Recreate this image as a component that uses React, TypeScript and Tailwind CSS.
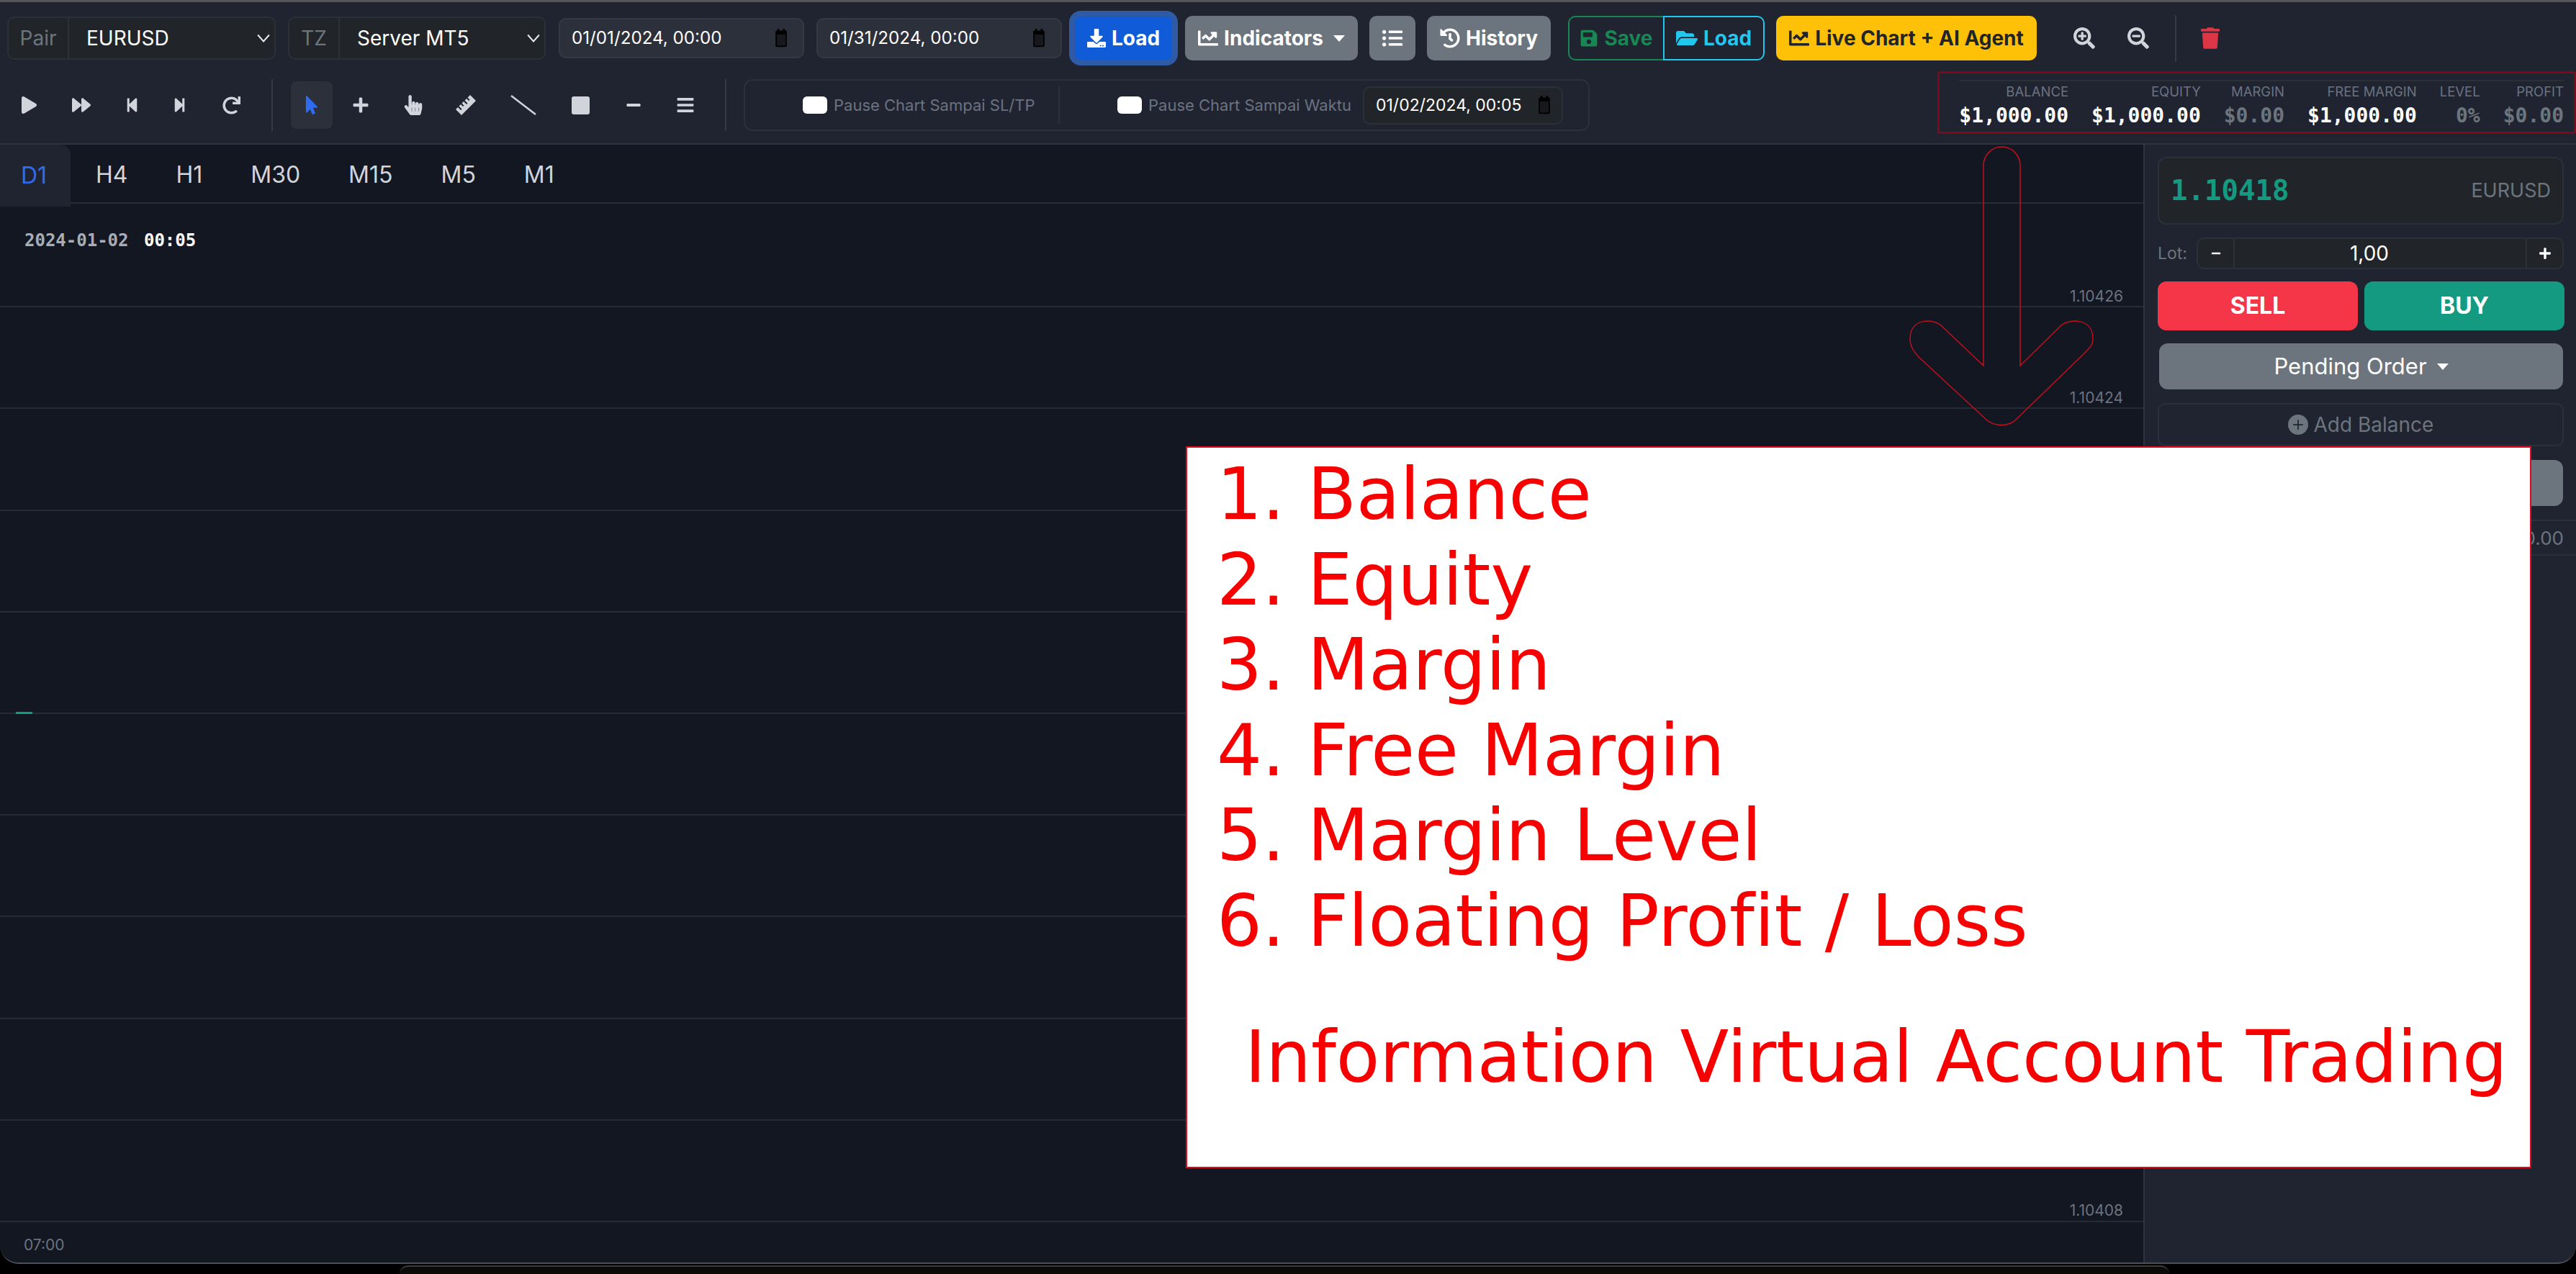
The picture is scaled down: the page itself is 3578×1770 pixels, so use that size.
import { ReactNode } from "react";
import { BsPlusCircleFill } from "react-icons/bs";
import {
  FaBars,
  FaChartLine,
  FaDownload,
  FaFolderOpen,
  FaForward,
  FaHandPointer,
  FaHistory,
  FaListUl,
  FaMinus,
  FaMousePointer,
  FaPlay,
  FaPlus,
  FaRedo,
  FaSave,
  FaSearchMinus,
  FaSearchPlus,
  FaStepBackward,
  FaStepForward,
  FaTrash,
} from "react-icons/fa";

const timeframes = ["H4", "H1", "M30", "M15", "M5", "M1"];

const stats = [
  { label: "BALANCE", value: "$1,000.00", on: true },
  { label: "EQUITY", value: "$1,000.00", on: true },
  { label: "MARGIN", value: "$0.00", on: false },
  { label: "FREE MARGIN", value: "$1,000.00", on: true },
  { label: "LEVEL", value: "0%", on: false },
  { label: "PROFIT", value: "$0.00", on: false },
];

const notes = ["1. Balance", "2. Equity", "3. Margin", "4. Free Margin", "5. Margin Level", "6. Floating Profit / Loss"];

const CalendarIcon = () => (
  <svg viewBox="0 0 20 30" className="w-[20px] h-[26px] shrink-0">
    <rect x="4" y="0" width="3" height="5" fill="#000" />
    <rect x="13" y="0" width="3" height="5" fill="#000" />
    <rect x="1" y="3" width="18" height="26" rx="2" fill="#000" />
    <rect x="3" y="9" width="14" height="18" fill="#16181d" />
  </svg>
);

const Chevron = () => (
  <svg viewBox="0 0 16 16" className="w-[18px] h-[18px] shrink-0" fill="none" stroke="#e5e7eb" strokeWidth="1.8">
    <path d="M1 4l7 8 7-8" />
  </svg>
);

const RulerIcon = () => (
  <svg viewBox="0 0 30 30" className="h-[30px] w-[30px]">
    <path
      fill="#d1d5db"
      fillRule="evenodd"
      d="M21 1L29 9 9 29 1 21 4 18 8 22 9.500 20.500 5.500 16.500 8 14 11 17 12.500 15.500 9.500 12.500 12 10 16 14 17.500 12.500 13.500 8.500 16 6 19 9 20.500 7.500 17.500 4.500Z"
    />
  </svg>
);

const Caret = () => <span className="ml-[14px] inline-block border-x-[8px] border-x-transparent border-t-[9px] border-t-white" />;

const SelectGroup = ({ label, value, labelWidth, width }: { label: string; value: string; labelWidth: string; width: string }) => (
  <div className={`flex h-[60px] items-stretch rounded-[10px] border-2 border-[#2b3039] bg-[#212529] ${width}`}>
    <div className={`flex items-center justify-center border-r-2 border-[#2b3039] text-[28px] text-[#6c757d] ${labelWidth}`}>{label}</div>
    <div className="flex flex-1 items-center justify-between pl-[24px] pr-[6px] text-[28px] text-white">
      <span>{value}</span>
      <Chevron />
    </div>
  </div>
);

const DateInput = ({ value, className }: { value: string; className: string }) => (
  <div className={`flex items-center justify-between rounded-[10px] border-2 pl-[16px] text-white ${className}`}>
    <span>{value}</span>
    <CalendarIcon />
  </div>
);

const GrayButton = ({ className, children }: { className: string; children: ReactNode }) => (
  <div className={`flex h-[62px] items-center justify-center rounded-[10px] bg-[#6c757d] text-[28px] font-bold text-white ${className}`}>{children}</div>
);

const ToolIcon = ({ children, className = "" }: { children: ReactNode; className?: string }) => (
  <div className={`flex h-[66px] w-[58px] items-center justify-center text-[#d1d5db] ${className}`}>{children}</div>
);

const PriceRow = ({ price }: { price?: string }) => (
  <div className="relative h-[141.2px] border-b-2 border-[#262b36]">
    {price && <span className="absolute bottom-[-2px] right-[28px] text-[21px] text-[#6b7280]">{price}</span>}
  </div>
);

const App = () => {
  return (
    <div className="relative h-[1770px] w-[3578px] overflow-hidden bg-black font-['Inter',sans-serif]">
      <div className="absolute bottom-0 left-[555px] h-[12px] w-[2458px] rounded-t-[20px] border-t-2 border-[#3a3b38] bg-[#0b0c0a]" />

      <div className="relative flex h-[1756px] flex-col overflow-hidden rounded-b-[26px] border-b-2 border-t-[3px] border-b-[#4a4f5a] border-t-[#54565a] bg-[#1f2430]">
        <header className="h-[198px] shrink-0 border-b-2 border-[#2e3340]">
          <div className="flex h-[100px] items-center pl-[10px]">
            <SelectGroup label="Pair" value="EURUSD" labelWidth="w-[84px]" width="w-[373px]" />
            <div className="ml-[17px]">
              <SelectGroup label="TZ" value="Server MT5" labelWidth="w-[70px]" width="w-[358px]" />
            </div>
            <DateInput value="01/01/2024, 00:00" className="ml-[18px] h-[56px] w-[341px] border-[#343945] bg-[#2b303b] pr-[20px] text-[24.200px]" />
            <DateInput value="01/31/2024, 00:00" className="ml-[17px] h-[56px] w-[341px] border-[#343945] bg-[#2b303b] pr-[20px] text-[24.200px]" />
            <div className="ml-[18px] flex h-[60px] w-[135px] items-center justify-center gap-[8px] rounded-[8px] bg-[#0f5bd8] text-[28px] font-bold text-white shadow-[0_0_0_8px_#2f5aa6]">
              <FaDownload className="h-[26px] w-[26px]" />
              Load
            </div>
            <GrayButton className="ml-[18px] w-[240px]">
              <FaChartLine className="mr-[8px] h-[28px] w-[28px]" />
              Indicators
              <Caret />
            </GrayButton>
            <GrayButton className="ml-[16px] w-[64px]">
              <FaListUl className="h-[28px] w-[28px]" />
            </GrayButton>
            <GrayButton className="ml-[16px] w-[172px]">
              <FaHistory className="mr-[8px] h-[28px] w-[28px]" />
              History
            </GrayButton>
            <div className="ml-[24px] flex h-[62px] text-[28px] font-bold">
              <div className="flex w-[132px] items-center justify-center gap-[8px] rounded-l-[10px] border-2 border-r-0 border-[#198754] text-[#198754]">
                <FaSave className="h-[26px] w-[26px]" />
                Save
              </div>
              <div className="flex w-[141px] items-center justify-center gap-[8px] rounded-r-[10px] border-2 border-[#22c7ee] text-[#22c7ee]">
                <FaFolderOpen className="h-[28px] w-[30px]" />
                Load
              </div>
            </div>
            <div className="ml-[16px] flex h-[62px] w-[362px] items-center justify-center gap-[8px] rounded-[10px] bg-[#ffc107] text-[28px] font-bold text-[#212529]">
              <FaChartLine className="h-[28px] w-[28px]" />
              Live Chart + AI Agent
            </div>
            <FaSearchPlus className="ml-[51px] h-[30px] w-[30px] text-[#d1d5db]" />
            <FaSearchMinus className="ml-[45px] h-[30px] w-[30px] text-[#d1d5db]" />
            <div className="ml-[36px] h-[65px] w-[2px] bg-[#343945]" />
            <FaTrash className="ml-[34px] h-[30px] w-[26px] text-[#dc3545]" />
          </div>

          <div className="flex h-[96px] items-start pt-[7px]">
            <div className="flex h-[72px] w-[379px] items-center border-r-2 border-[#343945] pl-[30px] text-[#d1d5db]">
              <FaPlay className="h-[24px] w-[21px]" />
              <FaForward className="ml-[48px] h-[26px] w-[28px]" />
              <FaStepBackward className="ml-[47px] h-[26px] w-[19px]" />
              <FaStepForward className="ml-[47px] h-[26px] w-[19px]" />
              <FaRedo className="ml-[50px] h-[25px] w-[25px]" />
            </div>
            <div className="flex h-[72px] items-center pl-[25px]">
              <ToolIcon className="rounded-[8px] bg-[#2b303b]">
                <FaMousePointer className="h-[26px] w-[22px] text-[#2f6bf0]" />
              </ToolIcon>
              <ToolIcon className="ml-[10px]">
                <FaPlus className="h-[24px] w-[24px]" />
              </ToolIcon>
              <ToolIcon className="ml-[15px]">
                <FaHandPointer className="h-[28px] w-[26px]" />
              </ToolIcon>
              <ToolIcon className="ml-[15px]">
                <RulerIcon />
              </ToolIcon>
              <ToolIcon className="ml-[22px]">
                <svg viewBox="0 0 36 28" className="h-[28px] w-[36px]" stroke="#d1d5db" strokeWidth="2.5">
                  <path d="M1 1l34 26" />
                </svg>
              </ToolIcon>
              <ToolIcon className="ml-[21px]">
                <div className="h-[25px] w-[25px] rounded-[3px] bg-[#d1d5db]" />
              </ToolIcon>
              <ToolIcon className="ml-[16px]">
                <FaMinus className="h-[22px] w-[22px]" />
              </ToolIcon>
              <ToolIcon className="ml-[14px]">
                <FaBars className="h-[26px] w-[26px]" />
              </ToolIcon>
            </div>
            <div className="ml-[26px] h-[72px] w-[2px] bg-[#343945]" />
            <div className="ml-[24px] flex h-[72px] w-[1175px] items-center rounded-[12px] border-2 border-[#2b3039]">
              <div className="flex h-[52px] w-[437px] items-center border-r-2 border-[#2b3039] pl-[80px]">
                <div className="h-[24px] w-[34px] rounded-[6px] bg-white" />
                <span className="ml-[9px] text-[22px] text-[#6b7280]">Pause Chart Sampai SL/TP</span>
              </div>
              <div className="ml-[80px] h-[24px] w-[34px] rounded-[6px] bg-white" />
              <span className="ml-[9px] text-[22px] text-[#6b7280]">Pause Chart Sampai Waktu</span>
              <DateInput value="01/02/2024, 00:05" className="ml-[16px] h-[53px] w-[278px] border-[#2b3039] bg-[#212529] pr-[14px] text-[23px]" />
            </div>
            <div className="ml-auto mr-[17px] mt-[1px] flex gap-[32px] border-t-2 border-[#2b3039]">
              {stats.map((stat) => (
                <div key={stat.label} className="flex flex-col items-end">
                  <span className="text-[18.500px] leading-[28px] text-[#6b7280]">{stat.label}</span>
                  <span className={`mt-[2px] font-['DejaVu_Sans_Mono',monospace] text-[28px] font-bold leading-[36px] ${stat.on ? "text-white" : "text-[#6c757d]"}`}>{stat.value}</span>
                </div>
              ))}
            </div>
          </div>
        </header>

        <div className="flex min-h-0 flex-1">
          <main className="flex min-w-0 flex-1 flex-col bg-[#121722]">
            <nav className="flex h-[82px] shrink-0 items-center border-b-2 border-[#262b36] text-[32px] text-[#d1d5db]">
              <div className="flex h-[86px] w-[98px] items-center justify-center self-start rounded-tr-[14px] bg-[#1f2430] pr-[4px] text-[#2f6bf0]">D1</div>
              <div className="flex items-center gap-[67px] pl-[35px] pt-[4px]">
                {timeframes.map((tf) => (
                  <span key={tf}>{tf}</span>
                ))}
              </div>
            </nav>
            <div className="relative flex-1">
              <div className="pt-[3px]">
                <PriceRow price="1.10426" />
                <PriceRow price="1.10424" />
                <PriceRow />
                <PriceRow />
                <PriceRow />
                <PriceRow />
                <PriceRow />
                <PriceRow />
                <PriceRow />
                <PriceRow price="1.10408" />
              </div>
              <div className="absolute left-[34px] top-[36px] font-['DejaVu_Sans_Mono',monospace] text-[24px] font-bold leading-[30px] text-[#a8adb5]">
                2024-01-02 <span className="ml-[7px] text-white">00:05</span>
              </div>
              <div className="absolute left-[22px] top-[706px] h-[3px] w-[23px] bg-[#149a80]" />
              <div className="absolute bottom-[9px] left-[33px] text-[21px] text-[#6b7280]">07:00</div>
            </div>
          </main>

          <aside className="w-[601px] shrink-0 border-l-2 border-[#2e3340] pt-[17px]">
            <div className="ml-[18px] mr-[17px] flex h-[94px] items-center justify-between rounded-[12px] border-2 border-[#2b3039] bg-[#212529] pl-[16px] pr-[16px]">
              <span className="font-['DejaVu_Sans_Mono',monospace] text-[39px] font-bold text-[#149a80]">1.10418</span>
              <span className="text-[27px] text-[#6c757d]">EURUSD</span>
            </div>
            <div className="ml-[18px] mr-[17px] mt-[18px] flex h-[44px] items-center">
              <span className="w-[54px] text-[23px] text-[#6c757d]">Lot:</span>
              <div className="flex h-[44px] flex-1 items-stretch rounded-[10px] border-2 border-[#2b3039] bg-[#212529] text-white">
                <div className="flex w-[51px] items-center justify-center border-r-2 border-[#2b3039]">
                  <FaMinus className="h-[14px] w-[14px]" />
                </div>
                <div className="flex flex-1 items-center justify-center pr-[30px] text-[28px]">1,00</div>
                <div className="flex w-[51px] items-center justify-center border-l-2 border-[#2b3039]">
                  <FaPlus className="h-[18px] w-[18px]" />
                </div>
              </div>
            </div>
            <div className="ml-[18px] mr-[16px] mt-[17px] flex gap-[9px] text-[32px] font-bold text-white">
              <div className="flex h-[68px] flex-1 items-center justify-center rounded-[12px] bg-[#f53649]">SELL</div>
              <div className="flex h-[68px] flex-1 items-center justify-center rounded-[12px] bg-[#149a80]">BUY</div>
            </div>
            <div className="ml-[20px] mr-[18px] mt-[18px] flex h-[64px] items-center justify-center rounded-[12px] bg-[#6c757d] text-[31px] text-white">
              Pending Order
              <Caret />
            </div>
            <div className="ml-[18px] mr-[17px] mt-[19px] flex h-[60px] items-center justify-center gap-[8px] rounded-[10px] border-2 border-[#2b3039] text-[28px] text-[#6c757d]">
              <BsPlusCircleFill className="h-[28px] w-[28px]" />
              Add Balance
            </div>
            <div className="ml-[20px] mr-[18px] mt-[19px] h-[64px] rounded-[12px] bg-[#6c757d]" />
            <div className="mt-[19px] flex h-[50px] items-center justify-end border-y-2 border-[#2b3039] pr-[17px] text-[26px] text-[#6c757d]">$0.00</div>
          </aside>
        </div>
      </div>

      <div className="absolute left-[2691px] right-0 top-[99px] h-[87px] rounded-[3px] border-[3px] border-[#7d0a1a]" />

      <svg className="absolute left-[2640px] top-[200px] h-[400px] w-[280px]" viewBox="0 0 280 400" fill="none" stroke="#c30f1e" strokeWidth="1.5">
        <path d="M115 308V30A25.5 26 0 0 1 166 30V308L222 253C232 243 267 240 267 271C267 280 262 283 256 290L160 383C150 393 130 393 119 383L25 296C19 289 13 282 13 271C13 240 47 243 57 253L115 308Z" />
      </svg>

      <div className="absolute left-[1647px] top-[620px] h-[1003px] w-[1869px] border-2 border-[#e00a20] bg-white pl-[41px] pt-[6px] font-['DejaVu_Sans',sans-serif] text-[99px] leading-[118.6px] text-[#f60000] [font-variant-ligatures:none]">
        {notes.map((note) => (
          <div key={note} className="whitespace-nowrap">
            {note}
          </div>
        ))}
        <div className="ml-[39px] mt-[70px] whitespace-nowrap">Information Virtual Account Trading</div>
      </div>
    </div>
  );
};

export default App;
